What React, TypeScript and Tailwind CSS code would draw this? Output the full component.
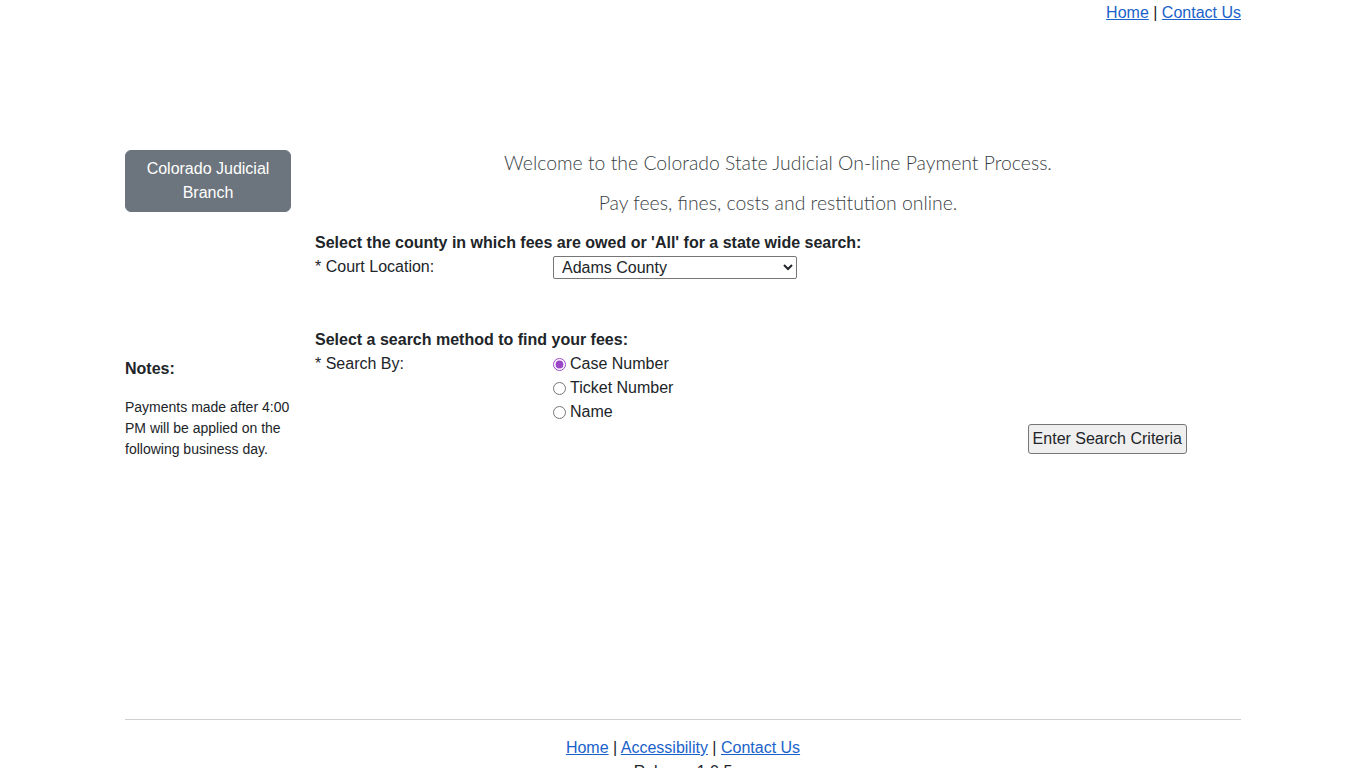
import React, { useState } from 'react';

const App: React.FC = () => {
  const [method, setMethod] = useState('case');

  return (
    <div
      className="min-h-screen bg-white text-[#212529] text-[16px] leading-6"
      style={{ fontFamily: '"Liberation Sans", Arial, sans-serif' }}
    >
      <div className="mx-auto w-[1116px]">
        {/* Top nav */}
        <div className="pt-px text-right">
          <a href="#" className="text-[#1a62c9] underline">Home</a> |{' '}
          <a href="#" className="text-[#1a62c9] underline">Contact Us</a>
        </div>

        <div className="mt-[123px] flex gap-6">
          {/* Left column */}
          <div className="w-[166px] shrink-0">
            <button className="mt-[2px] w-full rounded-md border border-[#6c757d] bg-[#6c757d] py-1.5 text-center text-white">
              Colorado Judicial Branch
            </button>
            <div className="mt-[145px] font-bold">Notes:</div>
            <p className="mt-4 text-[14px] leading-[21px]">
              Payments made after 4:00 PM will be applied on the following business day.
            </p>
          </div>

          {/* Main column */}
          <div className="flex-1">
            <p
              className="mb-[10px] text-center text-[19.4px] font-light leading-[30px] text-[#3a3f44]"
              style={{ fontFamily: 'Lato, "Liberation Sans", sans-serif' }}
            >
              Welcome to the Colorado State Judicial On-line Payment Process.
            </p>
            <p
              className="text-center text-[19.4px] font-light leading-[30px] text-[#3a3f44]"
              style={{ fontFamily: 'Lato, "Liberation Sans", sans-serif' }}
            >
              Pay fees, fines, costs and restitution online.
            </p>

            <div className="mt-[13px] font-bold">
              Select the county in which fees are owed or 'All' for a state wide search:
            </div>
            <div className="flex">
              <div className="w-[238px] shrink-0">* Court Location:</div>
              <select
                defaultValue="Adams County"
                className="mt-[1px] h-[23px] w-[244px] rounded-[2px] border border-[#767676] bg-white pl-1 text-[16px] leading-5"
              >
                <option>All</option>
                <option>Adams County</option>
                <option>Alamosa County</option>
                <option>Arapahoe County</option>
              </select>
            </div>

            <div className="mt-[49px] font-bold">Select a search method to find your fees:</div>
            <div className="flex">
              <div className="w-[238px] shrink-0">* Search By:</div>
              <div className="flex flex-col">
                {[
                  ['case', 'Case Number'],
                  ['ticket', 'Ticket Number'],
                  ['name', 'Name'],
                ].map(([v, l]) => (
                  <label key={v} className="flex h-6 items-center gap-1">
                    <input
                      type="radio"
                      name="method"
                      checked={method === v}
                      onChange={() => setMethod(v)}
                      className="m-0 h-[13px] w-[13px] accent-[#9b45c8]"
                    />
                    <span>{l}</span>
                  </label>
                ))}
              </div>
            </div>

            <div className="flex justify-end pr-[54px]">
              <button className="h-[30px] rounded-[3px] border border-[#767676] bg-[#efefef] px-1 text-[16px]">
                Enter Search Criteria
              </button>
            </div>
          </div>
        </div>

        {/* Footer */}
        <hr className="mt-[259px] border-t border-[#d0d0d0]" />
        <div className="mt-4 text-center">
          <a href="#" className="text-[#1a62c9] underline">Home</a> |{' '}
          <a href="#" className="text-[#1a62c9] underline">Accessibility</a> |{' '}
          <a href="#" className="text-[#1a62c9] underline">Contact Us</a>
        </div>
        <div className="text-center">Release 1.0.5</div>
      </div>
    </div>
  );
};

export default App;
